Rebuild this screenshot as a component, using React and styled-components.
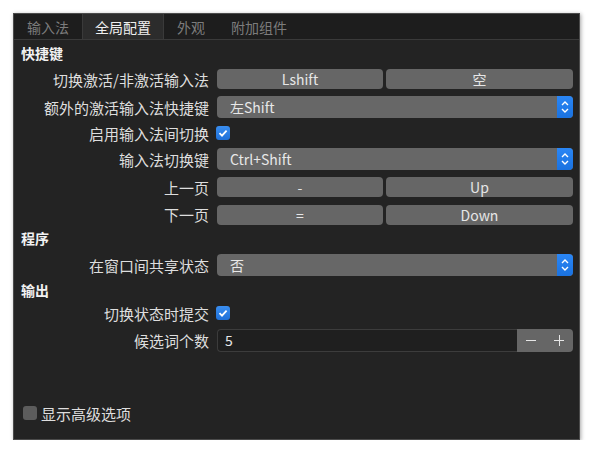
import React from "react";
import styled, { createGlobalStyle } from "styled-components";

const GlobalStyle = createGlobalStyle`
  body {
    margin: 0;
    background: #ffffff;
    font-family: "Noto Sans CJK SC", "Noto Sans", sans-serif;
  }
`;

const tabs = ["输入法", "全局配置", "外观", "附加组件"];

const ComboArrow = () => (
  <svg width="16" height="22" viewBox="0 0 16 22">
    <path d="M5 9 L8 6 L11 9" fill="none" stroke="#fff" strokeWidth="1.4" />
    <path d="M5 13 L8 16 L11 13" fill="none" stroke="#fff" strokeWidth="1.4" />
  </svg>
);

const Tick = () => (
  <svg width="14" height="14" viewBox="0 0 14 14">
    <path d="M3.5 7.2 L6 9.6 L10.6 4.6" fill="none" stroke="#fff" strokeWidth="1.8" />
  </svg>
);

function Combo({ value }) {
  return (
    <ComboBox>
      <ComboValue>{value}</ComboValue>
      <ComboButton>
        <ComboArrow />
      </ComboButton>
    </ComboBox>
  );
}

function KeyPair({ a, b }) {
  return (
    <Pair>
      <KeyButton>{a}</KeyButton>
      <KeyButton>{b}</KeyButton>
    </Pair>
  );
}

export default function App() {
  return (
    <Page>
      <GlobalStyle />
      <Window>
        <TabBar>
          {tabs.map((t, i) => (
            <Tab key={t} $active={i === 1}>
              {t}
            </Tab>
          ))}
        </TabBar>
        <Body>
          <Form>
            <Section $h={24}>快捷键</Section>
            <Row $h={28}>
              <Label>切换激活/非激活输入法</Label>
              <KeyPair a="Lshift" b="空" />
            </Row>
            <Row $h={28}>
              <Label>额外的激活输入法快捷键</Label>
              <Combo value="左Shift" />
            </Row>
            <Row $h={24}>
              <Label>启用输入法间切换</Label>
              <CheckBox $on>
                <Tick />
              </CheckBox>
            </Row>
            <Row $h={28}>
              <Label>输入法切换键</Label>
              <Combo value="Ctrl+Shift" />
            </Row>
            <Row $h={28}>
              <Label>上一页</Label>
              <KeyPair a="-" b="Up" />
            </Row>
            <Row $h={27}>
              <Label>下一页</Label>
              <KeyPair a="=" b="Down" />
            </Row>

            <Section $h={20}>程序</Section>
            <Row $h={34}>
              <Label>在窗口间共享状态</Label>
              <Combo value="否" />
            </Row>

            <Section $h={16}>输出</Section>
            <Row $h={30}>
              <Label>切换状态时提交</Label>
              <CheckBox $on>
                <Tick />
              </CheckBox>
            </Row>
            <Row $h={24}>
              <Label>候选词个数</Label>
              <Spin>
                <SpinInput>5</SpinInput>
                <SpinButtons>
                  <SpinButton>
                    <svg width="12" height="12" viewBox="0 0 12 12">
                      <path d="M1 6.5 H11" stroke="#e6e6e6" strokeWidth="1" />
                    </svg>
                  </SpinButton>
                  <SpinButton>
                    <svg width="12" height="12" viewBox="0 0 12 12">
                      <path d="M1 6.5 H11 M6.5 1 V12" stroke="#e6e6e6" strokeWidth="1" />
                    </svg>
                  </SpinButton>
                </SpinButtons>
              </Spin>
            </Row>
          </Form>

          <Footer>
            <CheckBox />
            <FooterText>显示高级选项</FooterText>
          </Footer>
        </Body>
      </Window>
    </Page>
  );
}

// Styled Components
const Page = styled.div`
  padding: 13px 0 0 13px;
`;

const Window = styled.div`
  width: 567px;
  height: 427px;
  box-sizing: border-box;
  display: flex;
  flex-direction: column;
  background: #232323;
  border: 1px solid #4b4b4b;
  box-shadow: 1px 1px 4px rgba(0, 0, 0, 0.35);
`;

const TabBar = styled.div`
  display: flex;
  height: 25px;
  background: #1d1d1d;
  border-bottom: 1px solid #3a3a3a;
`;

const Tab = styled.div`
  display: flex;
  align-items: center;
  padding: 0 12px;
  font-size: 14px;
  color: ${(p) => (p.$active ? "#f0f0f0" : "#7c7c7c")};
  background: ${(p) => (p.$active ? "#2c2c2c" : "transparent")};
  border-left: 1px solid ${(p) => (p.$active ? "#3a3a3a" : "transparent")};
  border-right: 1px solid ${(p) => (p.$active ? "#3a3a3a" : "transparent")};
`;

const Body = styled.div`
  flex: 1;
  display: flex;
  flex-direction: column;
  justify-content: space-between;
  padding: 1px 6px 14px 7px;
`;

const Form = styled.div`
  display: flex;
  flex-direction: column;
`;

const Section = styled.div`
  height: ${(p) => p.$h}px;
  display: flex;
  align-items: center;
  font-size: 14px;
  font-weight: bold;
  color: #f2f2f2;
`;

const Row = styled.div`
  height: ${(p) => p.$h}px;
  display: grid;
  grid-template-columns: 188px 356px;
  column-gap: 8px;
  align-items: center;
`;

const Label = styled.div`
  text-align: right;
  font-size: 15px;
  color: #dedede;
  white-space: nowrap;
`;

const Pair = styled.div`
  display: grid;
  grid-template-columns: 166px 1fr;
  column-gap: 3px;
`;

const KeyButton = styled.div`
  height: 20px;
  display: flex;
  align-items: center;
  justify-content: center;
  background: #666666;
  border-radius: 4px;
  font-size: 14px;
  color: #e6e6e6;
`;

const ComboBox = styled.div`
  height: 22px;
  display: flex;
  border-radius: 4px;
  overflow: hidden;
  background: #676767;
`;

const ComboValue = styled.div`
  flex: 1;
  display: flex;
  align-items: center;
  padding-left: 13px;
  font-size: 14px;
  color: #e8e8e8;
`;

const ComboButton = styled.div`
  width: 16px;
  display: flex;
  align-items: center;
  justify-content: center;
  background: linear-gradient(#2a86f5, #1a72e0);
`;

const CheckBox = styled.div`
  width: 14px;
  height: 14px;
  margin-left: -1px;
  border-radius: 3px;
  display: flex;
  background: ${(p) => (p.$on ? "linear-gradient(#3a8ef0, #1f70d8)" : "#5c5c5c")};
`;

const Spin = styled.div`
  height: 23px;
  display: flex;
`;

const SpinInput = styled.div`
  flex: 1;
  display: flex;
  align-items: center;
  padding-left: 7px;
  background: #1f1f1f;
  border: 1px solid #3c3c3c;
  border-right: none;
  border-radius: 4px 0 0 4px;
  font-size: 14px;
  color: #e8e8e8;
`;

const SpinButtons = styled.div`
  width: 56px;
  display: grid;
  grid-template-columns: 1fr 1fr;
  background: #666666;
  border-radius: 0 4px 4px 0;
`;

const SpinButton = styled.div`
  display: flex;
  align-items: center;
  justify-content: center;
`;

const Footer = styled.div`
  height: 24px;
  display: flex;
  align-items: center;
  gap: 4px;
  padding-left: 3px;
`;

const FooterText = styled.div`
  font-size: 15px;
  color: #dedede;
`;
